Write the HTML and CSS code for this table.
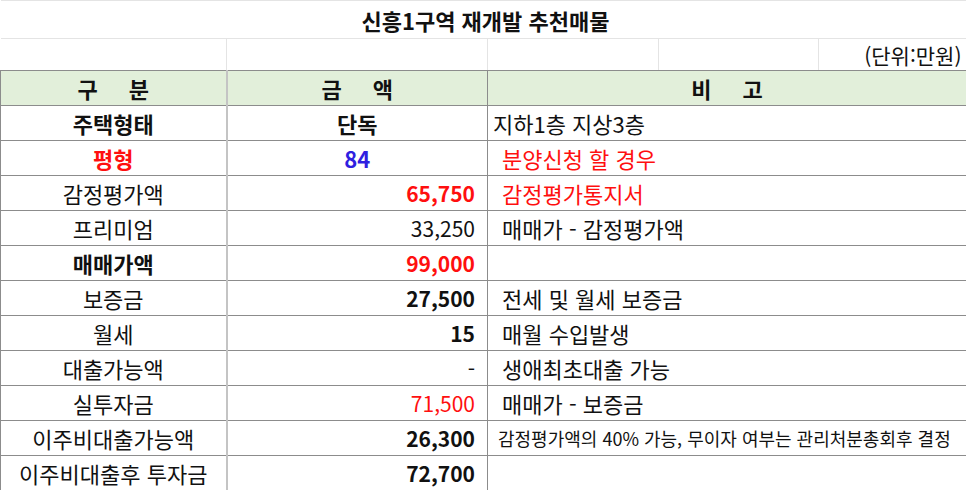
FILE: index.html
```html
<!DOCTYPE html>
<html lang="ko">
<head>
<meta charset="utf-8">
<title>신흥1구역 재개발 추천매물</title>
<link rel="stylesheet" href="styles.css">
</head>
<body>
<table class="sheet">
  <colgroup>
    <col class="c1"><col class="c2"><col class="c3"><col class="c4"><col class="c5">
  </colgroup>
  <tr class="title-row">
    <td colspan="5" class="title">신흥1구역 재개발 추천매물</td>
  </tr>
  <tr class="unit-row">
    <td class="grid"></td><td class="grid"></td><td class="grid"></td><td class="grid"></td>
    <td class="unit">(단위:만원)</td>
  </tr>
  <tr class="head-row">
    <th class="k">구&nbsp;&nbsp;&nbsp;&nbsp;&nbsp;분</th>
    <th>금&nbsp;&nbsp;&nbsp;&nbsp;&nbsp;액</th>
    <th colspan="3">비&nbsp;&nbsp;&nbsp;&nbsp;&nbsp;고</th>
  </tr>
  <tr>
    <td class="k b">주택형태</td><td class="mid b">단독</td><td colspan="3" class="note tight">지하1층 지상3층</td>
  </tr>
  <tr>
    <td class="k b red">평형</td><td class="mid b blue">84</td><td colspan="3" class="note red">분양신청 할 경우</td>
  </tr>
  <tr>
    <td class="k">감정평가액</td><td class="num b red">65,750</td><td colspan="3" class="note red">감정평가통지서</td>
  </tr>
  <tr>
    <td class="k">프리미엄</td><td class="num">33,250</td><td colspan="3" class="note">매매가 - 감정평가액</td>
  </tr>
  <tr>
    <td class="k b">매매가액</td><td class="num b red">99,000</td><td colspan="3" class="note"></td>
  </tr>
  <tr>
    <td class="k">보증금</td><td class="num b">27,500</td><td colspan="3" class="note">전세 및 월세 보증금</td>
  </tr>
  <tr>
    <td class="k">월세</td><td class="num b">15</td><td colspan="3" class="note">매월 수입발생</td>
  </tr>
  <tr>
    <td class="k">대출가능액</td><td class="num">-</td><td colspan="3" class="note">생애최초대출 가능</td>
  </tr>
  <tr>
    <td class="k">실투자금</td><td class="num red">71,500</td><td colspan="3" class="note">매매가 - 보증금</td>
  </tr>
  <tr>
    <td class="k">이주비대출가능액</td><td class="num b">26,300</td><td colspan="3" class="note small">감정평가액의 40% 가능, 무이자 여부는 관리처분총회후 결정</td>
  </tr>
  <tr>
    <td class="k">이주비대출후 투자금</td><td class="num b">72,700</td><td colspan="3" class="note"></td>
  </tr>
</table>
</body>
</html>
```

FILE: styles.css
```css
html, body {
  margin: 0;
  padding: 0;
  background: #ffffff;
}

body {
  font-family: "Noto Sans CJK KR", "Noto Sans", sans-serif;
  color: #111111;
}

.sheet {
  border-collapse: collapse;
  table-layout: fixed;
  width: 966px;
}

.c1 { width: 226px; }
.c2 { width: 261px; }
.c3 { width: 171px; }
.c4 { width: 160px; }
.c5 { width: 148px; }

.sheet td,
.sheet th {
  padding: 0;
  height: 34px;
  font-size: 22px;
  line-height: 26px;
  white-space: nowrap;
  overflow: hidden;
  border: 1px solid #8c8c8c;
}

.sheet .title-row td {
  height: 37px;
  border: none;
  border-top: 1px solid #e4e4e4;
  border-bottom: 1px solid #e4e4e4;
}

.sheet td.title {
  text-align: center;
  font-weight: 700;
  font-size: 22px;
  padding-left: 4px;
}

.sheet .unit-row td {
  height: 29px;
  border-top: none;
  border-left: none;
  border-right: 1px solid #e4e4e4;
  border-bottom: 1px solid #8c8c8c;
}

.sheet .unit-row td.unit {
  text-align: right;
  padding-right: 5px;
  font-size: 21px;
  vertical-align: bottom;
  padding-bottom: 2px;
  border-right: none;
}

.sheet .head-row th {
  background: #e2efda;
  font-weight: 700;
  text-align: center;
  height: 34px;
}

.sheet .k {
  text-align: center;
  border-right: 2px solid #c4c4c4;
}

.sheet td.mid {
  text-align: center;
}

.sheet td.num {
  text-align: right;
  padding-right: 12px;
  font-size: 21px;
}

.sheet td.note {
  text-align: left;
  padding-left: 14px;
}

.sheet td.note.tight {
  padding-left: 5px;
}

.sheet td.note.small {
  font-size: 18px;
  padding-left: 10px;
}

.b { font-weight: 700; }
.red { color: #ff0f0f; }
.blue { color: #2f1fe0; }
```
